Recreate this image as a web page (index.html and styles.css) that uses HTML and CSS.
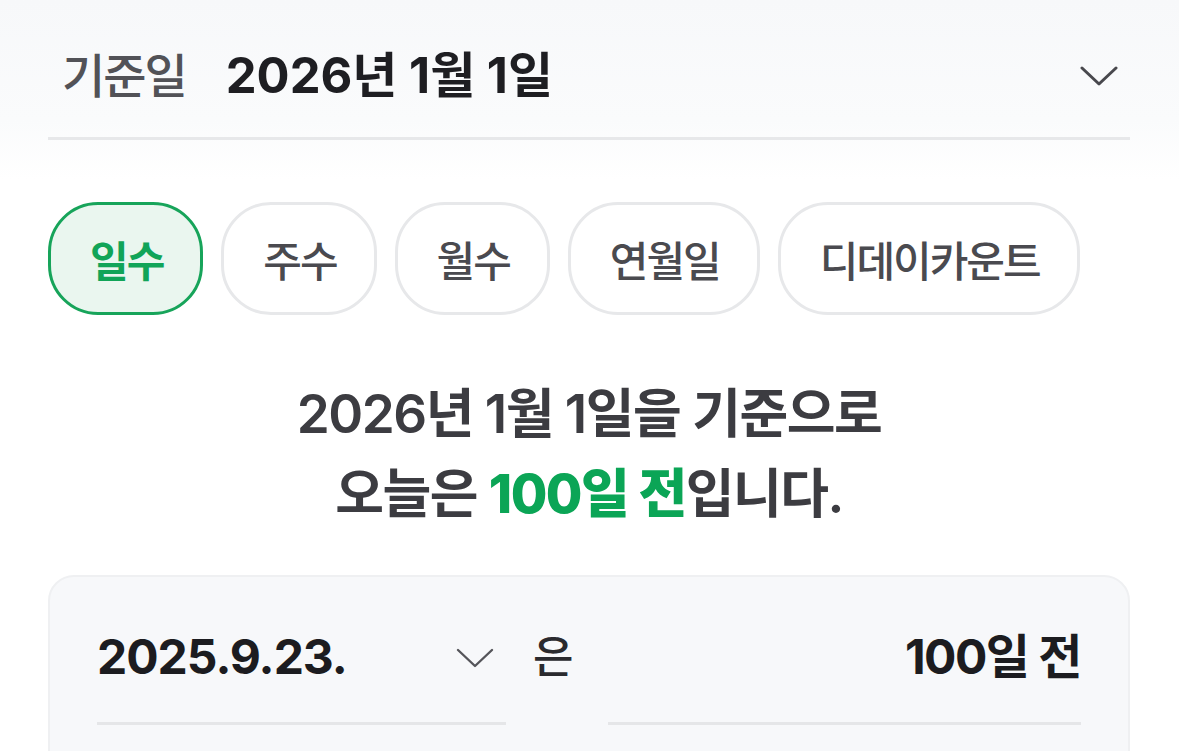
FILE: index.html
```html
<!DOCTYPE html>
<html lang="ko">
<head>
<meta charset="utf-8">
<link rel="stylesheet" href="styles.css">
</head>
<body>
<div class="page">
  <div class="header">
    <span class="label">기준일</span>
    <span class="date">2026년 1월 1일</span>
    <svg class="chev" width="38" height="22" viewBox="0 0 38 22"><path d="M2 3 L19 19 L36 3" fill="none" stroke="#48484d" stroke-width="3" stroke-linecap="round" stroke-linejoin="round"/></svg>
  </div>
  <div class="tabs">
    <div class="tab active">일수</div>
    <div class="tab">주수</div>
    <div class="tab">월수</div>
    <div class="tab">연월일</div>
    <div class="tab">디데이카운트</div>
  </div>
  <div class="message">
    <div>2026년 1월 1일을 기준으로</div>
    <div>오늘은 <span class="hl">100일 전</span>입니다.</div>
  </div>
  <div class="card">
    <div class="row">
      <div class="field left">
        <span class="val num">2025.9.23.</span>
        <svg class="chev2" width="38" height="22" viewBox="0 0 38 22"><path d="M2 3 L19 19 L36 3" fill="none" stroke="#55555a" stroke-width="2.4" stroke-linecap="round" stroke-linejoin="round"/></svg>
      </div>
      <span class="particle">은</span>
      <div class="field right">
        <span class="val">100일 전</span>
      </div>
    </div>
  </div>
</div>
</body>
</html>
```
FILE: styles.css
```css
html, body {
  margin: 0;
  padding: 0;
  background: #ffffff;
}
body {
  font-family: Inter, "Noto Sans CJK KR", "Noto Sans", sans-serif;
  background: linear-gradient(#f7f8fa 0px, #fafbfc 120px, #ffffff 180px);
  height: 751px;
  overflow: hidden;
}
.page {
  padding: 0 49px 0 48px;
}
.header {
  display: flex;
  align-items: center;
  padding: 46px 12px 31px 14px;
  border-bottom: 3px solid #e7e8ea;
}
.label {
  font-size: 47px;
  line-height: 60px;
  font-weight: 500;
  color: #525257;
  letter-spacing: -2px;
}
.date {
  margin-left: 40px;
  font-size: 49px;
  line-height: 60px;
  font-weight: 700;
  color: #1e1e22;
  letter-spacing: 0;
  flex: 1;
}
.chev {
  display: block;
}
.tabs {
  display: flex;
  gap: 18px;
  margin-top: 62px;
}
.tab {
  height: 107px;
  padding: 0 37px 0 39px;
  border: 3px solid #e7e8ea;
  border-radius: 50px;
  display: flex;
  align-items: center;
  justify-content: center;
  font-size: 42px;
  font-weight: 500;
  color: #4a4a4f;
  background: #ffffff;
  letter-spacing: -2px;
}
.tab.active {
  border-color: #17a45a;
  background: #eaf6ef;
  color: #11a458;
  font-weight: 700;
}
.message {
  margin-top: 59px;
  text-align: center;
  font-size: 53px;
  line-height: 80px;
  font-weight: 600;
  color: #3c3c41;
  letter-spacing: -1.5px;
}
.hl {
  color: #0ba556;
  font-weight: 800;
}
.card {
  margin-top: 41px;
  background: #f7f8fa;
  border: 2px solid #eff0f2;
  border-radius: 26px;
  padding: 50px 47px 0 47px;
  height: 180px;
}
.row {
  display: flex;
  align-items: flex-start;
}
.field {
  display: flex;
  align-items: flex-start;
  height: 95px;
  border-bottom: 3px solid #e5e6e8;
}
.field.left {
  width: 409px;
  justify-content: space-between;
}
.field.right {
  flex: 1;
  justify-content: flex-end;
}
.val {
  font-size: 48px;
  line-height: 60px;
  font-weight: 700;
  color: #1c1c20;
  letter-spacing: -1.5px;
}
.val.num {
  letter-spacing: -1px;
}
.chev2 {
  margin: 20px 12px 0 0;
}
.particle {
  font-size: 44px;
  line-height: 60px;
  font-weight: 500;
  color: #2a2a2e;
  margin: 0 38px 0 27px;
  letter-spacing: -3px;
}
```
